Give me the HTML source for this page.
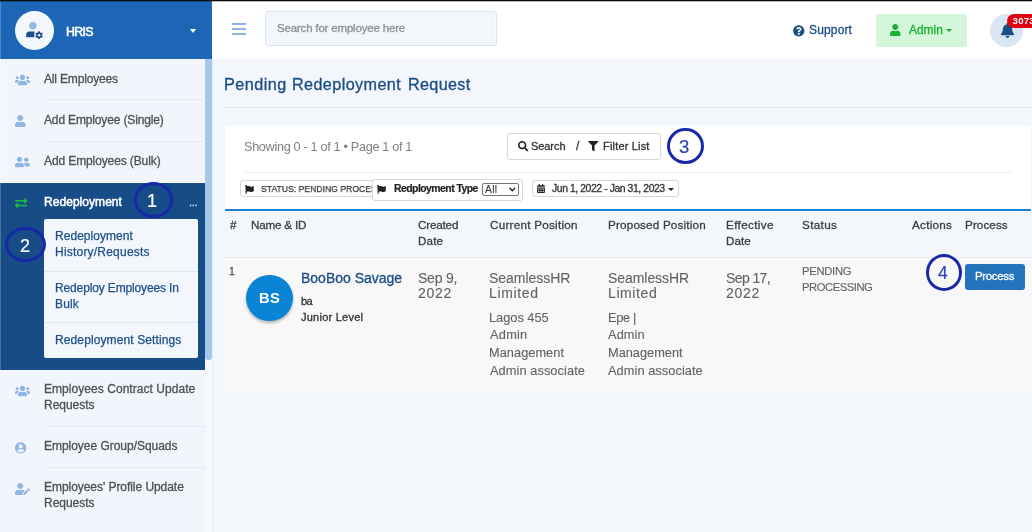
<!DOCTYPE html>
<html lang="en">
<head>
<meta charset="utf-8">
<title>Pending Redeployment Request</title>
<style>
*{box-sizing:border-box;margin:0;padding:0}
html,body{width:1032px;height:532px;overflow:hidden}
body{position:relative;background:#f3f6fb;font-family:"Liberation Sans",Arial,sans-serif;color:#555;font-size:12px}
.abs{position:absolute}
.t{position:absolute;white-space:nowrap;line-height:20px;will-change:transform}
svg{position:absolute;overflow:visible}
#topline{left:0;top:0;width:1032px;height:1px;background:#0d0d0d}
#topline2{left:0;top:1px;width:1032px;height:1px;background:rgba(0,0,0,.28)}
/* sidebar */
#sidebar{left:0;top:0;width:212px;height:532px;background:#f2f6fc}
#sideborder{left:211.5px;top:59px;width:1px;height:473px;background:#e6edf7}
#brand{left:0;top:0;width:212px;height:59px;background:#1c66b5}
#brand .av{left:15px;top:11px;width:39px;height:39px;border-radius:50%;background:#f4f7fb}
#track{left:205.4px;top:59px;width:6.6px;height:473px;background:#f5f8fc}
#scroll{left:205.4px;top:59px;width:6.6px;height:301px;background:#a3c8ec;border-radius:0 0 3px 3px}
.sep{position:absolute;left:44px;width:162px;height:1px;background:#e1ebf6}
#active{left:0;top:182.8px;width:205.4px;height:186.8px;background:#184c86}
#actline{left:0;top:181.8px;width:205.4px;height:1px;background:#fdfeff}
#sub{left:44px;top:219px;width:154px;height:139px;background:#f3f7fc;border-radius:2px}
#sub .l{position:absolute;left:0;width:154px;height:1px;background:#dce6f2}
/* topbar */
#topbar{left:212px;top:0;width:820px;height:59px;background:#fff}
#searchbox{left:265px;top:11px;width:232px;height:35px;background:#f3f6fb;border:1px solid #d6e3f3;border-radius:3px}
#searchin{left:269px;top:14px;width:224px;height:29px;background:#f3f6fb;border:1px solid #edf2f9;border-radius:3px}
.ham{position:absolute;left:232px;width:13.5px;height:2px;background:#8bb4e0}
#admin{left:876px;top:14px;width:91px;height:33px;background:#d3f5d8;border-radius:3px}
#bell{left:990px;top:14px;width:33px;height:33px;border-radius:50%;background:#dbe6f4}
#badge{will-change:transform;left:1007px;top:13.9px;width:40px;height:13.8px;border-radius:7px;background:#de0211;color:#fff;font-weight:bold;font-size:9.6px;line-height:14px;padding-left:5.6px;letter-spacing:.25px}
/* content */
#hr{left:224px;top:107px;width:808px;height:1px;background:#dce4ee}
#card{left:224.5px;top:125.5px;width:806.5px;height:84px;background:#fff}
#cardline{left:244px;top:172px;width:767px;height:1px;background:#ececec}
#btn{left:507px;top:133.3px;width:153.5px;height:26.4px;border:1px solid #d8d8d8;border-radius:3px;background:#fff}
.circ{position:absolute;border:3.8px solid #1728a9;border-radius:50%}
.chip{position:absolute;border:1px solid #d8d8d8;border-radius:3px;background:#fff;overflow:hidden}
#blue{left:224.5px;top:209px;width:806.5px;height:2px;background:#1c7fd2}
#thead{left:224.5px;top:211px;width:806.5px;height:46px;background:#f3f6fb}
#theadline{left:224.5px;top:257px;width:806.5px;height:1px;background:#e5e8ed}
#row{left:224.5px;top:258px;width:806.5px;height:134px;background:#f8f8f8}
#bs{left:246.2px;top:274.8px;width:46.4px;height:46.4px;border-radius:50%;background:#0b84d6;box-shadow:0 2px 3px rgba(0,0,0,.28)}
#proc{left:965px;top:263.5px;width:60px;height:26.3px;background:#2474bb;border-radius:3px}
#sel{left:482px;top:182.5px;width:36.5px;height:13px;border:1px solid #767676;border-radius:2px;background:#fff}
</style>
</head>
<body>
<!-- SIDEBAR -->
<div id="sidebar" class="abs"></div>
<div id="track" class="abs"></div>
<div id="sideborder" class="abs"></div>
<div id="brand" class="abs"><div class="av abs"></div></div>
<!-- user-cog brand icon -->
<svg style="left:24px;top:20px" width="20" height="20" viewBox="0 0 20 20">
  <circle cx="8.9" cy="5.7" r="3.7" fill="#93b9e4"/>
  <path d="M2.2 17.2v-2.6c0-1.7 1.3-3 3-3h5.2v5.6z" fill="#1b4f8b"/>
  <g fill="#1b4f8b"><circle cx="15.1" cy="15.2" r="2.9"/>
  <g stroke="#1b4f8b" stroke-width="1.6" stroke-linecap="butt">
   <line x1="15.1" y1="11.3" x2="15.1" y2="19.1"/><line x1="11.7" y1="13.25" x2="18.5" y2="17.15"/><line x1="11.7" y1="17.15" x2="18.5" y2="13.25"/></g>
  <circle cx="15.1" cy="15.2" r="1.25" fill="#f4f7fb"/></g>
</svg>
<div class="abs" style="left:189.5px;top:29px;width:0;height:0;border-left:3.5px solid transparent;border-right:3.5px solid transparent;border-top:4px solid #fff"></div>
<div id="scroll" class="abs"></div>

<div class="sep" style="top:99px"></div>
<div class="sep" style="top:141px"></div>
<div id="actline" class="abs"></div>
<div id="active" class="abs"></div>
<div id="sub" class="abs">
  <div class="l" style="top:52px"></div>
  <div class="l" style="top:102.5px"></div>
</div>
<div class="sep" style="top:426px"></div>
<div class="sep" style="top:467px"></div>

<!-- sidebar icons -->
<svg style="left:15.2px;top:74.3px" width="15" height="12" viewBox="0 0 640 512" fill="#8fb6e2"><path d="M96 224c35.300 0 64-28.700 64-64s-28.700-64-64-64-64 28.700-64 64 28.700 64 64 64zm448 0c35.300 0 64-28.700 64-64s-28.700-64-64-64-64 28.700-64 64 28.700 64 64 64zm32 32h-64c-17.600 0-33.500 7.100-45.100 18.600 40.300 22.100 68.900 62 75.100 109.400h66c17.700 0 32-14.300 32-32v-32c0-35.300-28.700-64-64-64zm-256 0c61.900 0 112-50.100 112-112S381.900 32 320 32 208 82.100 208 144s50.100 112 112 112zm76.800 32h-8.300c-20.800 10-43.900 16-68.500 16s-47.600-6-68.500-16h-8.300C179.600 288 128 339.600 128 403.200V432c0 26.500 21.500 48 48 48h288c26.500 0 48-21.500 48-48v-28.800c0-63.600-51.600-115.200-115.200-115.200zm-223.700-13.400C161.500 263.100 145.600 256 128 256H64c-35.300 0-64 28.700-64 64v32c0 17.700 14.300 32 32 32h65.900c6.300-47.400 34.900-87.300 75.200-109.400z"/></svg>
<svg style="left:15.3px;top:114.8px" width="10.5" height="12" viewBox="0 0 448 512" fill="#8fb6e2"><path d="M224 256c70.700 0 128-57.300 128-128S294.700 0 224 0 96 57.300 96 128s57.300 128 128 128zm89.600 32h-16.700c-22.200 10.200-46.900 16-72.900 16s-50.600-5.800-72.900-16h-16.700C60.200 288 0 348.200 0 422.400V464c0 26.500 21.500 48 48 48h352c26.500 0 48-21.500 48-48v-41.600c0-74.200-60.200-134.400-134.400-134.400z"/></svg>
<svg style="left:15.2px;top:156.2px" width="15" height="12" viewBox="0 0 640 512" fill="#8fb6e2"><path d="M192 256c61.900 0 112-50.100 112-112S253.900 32 192 32 80 82.100 80 144s50.100 112 112 112zm76.800 32h-8.300c-20.800 10-43.900 16-68.500 16s-47.600-6-68.500-16h-8.300C51.600 288 0 339.600 0 403.200V432c0 26.500 21.500 48 48 48h288c26.500 0 48-21.500 48-48v-28.800c0-63.600-51.600-115.200-115.200-115.200zM480 256c53 0 96-43 96-96s-43-96-96-96-96 43-96 96 43 96 96 96zm48 32h-3.800c-13.900 4.800-28.600 8-44.200 8s-30.300-3.200-44.200-8H432c-20.400 0-39.200 5.900-55.700 15.400 24.400 26.300 39.700 61.200 39.700 99.800v38.400c0 2.200-.5 4.300-.6 6.400H592c26.500 0 48-21.500 48-48 0-61.900-50.100-112-112-112z"/></svg>
<svg style="left:15.2px;top:196.7px" width="12.3" height="12.3" viewBox="0 0 512 512" fill="#1bc038"><path d="M0 168v-16c0-13.255 10.745-24 24-24h360V80c0-21.367 25.899-32.042 40.971-16.971l80 80c9.372 9.373 9.372 24.569 0 33.941l-80 80C409.956 271.982 384 261.456 384 240v-48H24c-13.255 0-24-10.745-24-24zm488 152H128v-48c0-21.314-25.862-32.080-40.971-16.971l-80 80c-9.372 9.373-9.372 24.569 0 33.941l80 80C102.057 463.968 128 453.437 128 432v-48h360c13.255 0 24-10.745 24-24v-16c0-13.255-10.745-24-24-24z"/></svg>
<svg style="left:15.2px;top:384.8px" width="15" height="12" viewBox="0 0 640 512" fill="#8fb6e2"><path d="M96 224c35.300 0 64-28.700 64-64s-28.700-64-64-64-64 28.700-64 64 28.700 64 64 64zm448 0c35.300 0 64-28.700 64-64s-28.700-64-64-64-64 28.700-64 64 28.700 64 64 64zm32 32h-64c-17.600 0-33.500 7.100-45.100 18.600 40.300 22.100 68.900 62 75.100 109.400h66c17.700 0 32-14.300 32-32v-32c0-35.300-28.700-64-64-64zm-256 0c61.900 0 112-50.100 112-112S381.900 32 320 32 208 82.100 208 144s50.100 112 112 112zm76.800 32h-8.300c-20.800 10-43.900 16-68.500 16s-47.600-6-68.500-16h-8.300C179.600 288 128 339.600 128 403.200V432c0 26.500 21.500 48 48 48h288c26.500 0 48-21.500 48-48v-28.800c0-63.600-51.600-115.200-115.200-115.200zm-223.700-13.400C161.500 263.100 145.600 256 128 256H64c-35.300 0-64 28.700-64 64v32c0 17.700 14.300 32 32 32h65.900c6.300-47.400 34.900-87.300 75.200-109.400z"/></svg>
<svg style="left:15.2px;top:441.7px" width="11.4" height="11.7" viewBox="0 0 496 512" fill="#8fb6e2"><path d="M248 8C111 8 0 119 0 256s111 248 248 248 248-111 248-248S385 8 248 8zm0 96c48.600 0 88 39.400 88 88s-39.400 88-88 88-88-39.400-88-88 39.400-88 88-88zm0 344c-58.700 0-111.300-26.600-146.500-68.200 18.800-35.400 55.600-59.800 98.500-59.800 2.400 0 4.800.4 7.100 1.100 13 4.200 26.600 6.900 40.900 6.900 14.300 0 28-2.700 40.900-6.900 2.300-.7 4.700-1.100 7.100-1.100 42.900 0 79.700 24.400 98.500 59.800C359.300 421.400 306.700 448 248 448z"/></svg>
<svg style="left:15.2px;top:482.5px" width="15" height="12" viewBox="0 0 640 512" fill="#8fb6e2"><path d="M224 256c70.700 0 128-57.300 128-128S294.700 0 224 0 96 57.300 96 128s57.300 128 128 128zm89.600 32h-16.700c-22.200 10.200-46.900 16-72.900 16s-50.600-5.800-72.900-16h-16.700C60.200 288 0 348.200 0 422.400V464c0 26.500 21.500 48 48 48h274.900c-2.400-6.800-3.400-14-2.600-21.300l6.800-60.900 1.200-11.100 7.900-7.900 77.300-77.300c-24.500-27.700-60-45.500-99.900-45.500zm45.300 145.300l-6.800 61c-1.100 10.200 7.500 18.800 17.600 17.600l60.900-6.800 137.900-137.900-71.700-71.700-137.900 137.800zM633 268.900L595.100 231c-9.300-9.300-24.500-9.300-33.800 0l-37.800 37.800-4.100 4.100 71.800 71.700 41.800-41.800c9.300-9.400 9.300-24.500 0-33.900z"/></svg>

<!-- annotation circles 1 & 2 -->
<div class="circ" style="left:133.5px;top:182.3px;width:39.7px;height:35.6px"></div>
<div class="circ" style="left:5px;top:227.2px;width:41px;height:35.2px"></div>

<!-- TOPBAR -->
<div id="topbar" class="abs"></div>
<div class="ham" style="top:22.8px"></div>
<div class="ham" style="top:27.8px"></div>
<div class="ham" style="top:32.8px"></div>
<div id="searchbox" class="abs"></div>
<div id="searchin" class="abs"></div>
<svg style="left:792.8px;top:24.5px" width="11.6" height="11.6" viewBox="0 0 512 512" fill="#1a4c86"><path d="M504 256c0 136.997-111.043 248-248 248S8 392.997 8 256C8 119.083 119.043 8 256 8s248 111.083 248 248zM262.655 90c-54.497 0-89.255 22.957-116.549 63.758-3.536 5.286-2.353 12.415 2.715 16.258l34.699 26.310c5.205 3.947 12.621 3.008 16.665-2.122 17.864-22.658 30.113-35.797 57.303-35.797 20.429 0 45.698 13.148 45.698 32.958 0 14.976-12.363 22.667-32.534 33.976C247.128 238.528 216 254.941 216 296v4c0 6.627 5.373 12 12 12h56c6.627 0 12-5.373 12-12v-1.333c0-28.462 83.186-29.647 83.186-106.667 0-58.002-60.165-102-116.531-102zM256 338c-25.365 0-46 20.635-46 46 0 25.364 20.635 46 46 46s46-20.636 46-46c0-25.365-20.635-46-46-46z"/></svg>
<div id="admin" class="abs"></div>
<svg style="left:890.4px;top:23.6px" width="10.5" height="12" viewBox="0 0 448 512" fill="#18b233"><path d="M224 256c70.700 0 128-57.300 128-128S294.700 0 224 0 96 57.300 96 128s57.300 128 128 128zm89.600 32h-16.700c-22.200 10.200-46.900 16-72.900 16s-50.600-5.800-72.900-16h-16.700C60.200 288 0 348.200 0 422.400V464c0 26.500 21.500 48 48 48h352c26.500 0 48-21.500 48-48v-41.600c0-74.200-60.200-134.400-134.400-134.400z"/></svg>
<div class="abs" style="left:946.3px;top:29.3px;width:0;height:0;border-left:3.2px solid transparent;border-right:3.2px solid transparent;border-top:3.6px solid #18b233"></div>
<div id="bell" class="abs"></div>
<svg style="left:1000.7px;top:22.9px" width="13.1" height="15" viewBox="0 0 448 512" fill="#1a4c86"><path d="M224 512c35.320 0 63.970-28.650 63.970-64H160.030c0 35.350 28.650 64 63.970 64zm215.390-149.710c-19.320-20.760-55.470-51.990-55.470-154.290 0-77.700-54.480-139.900-127.940-155.160V32c0-17.670-14.320-32-31.980-32s-31.980 14.330-31.980 32v20.840C118.560 68.100 64.080 130.300 64.080 208c0 102.300-36.150 133.530-55.470 154.290-6 6.450-8.660 14.160-8.610 21.710.11 16.400 12.980 32 32.100 32h383.800c19.120 0 32-15.600 32.100-32 .05-7.550-2.610-15.270-8.610-21.710z"/></svg>
<div id="badge" class="abs">3073</div>

<!-- CONTENT -->
<div id="hr" class="abs"></div>
<div id="card" class="abs"></div>
<div id="btn" class="abs"></div>
<svg style="left:517.7px;top:140.7px" width="10.3" height="10.3" viewBox="0 0 512 512" fill="#222"><path d="M505 442.700L405.300 343c-4.500-4.500-10.600-7-17-7H372c27.600-35.300 44-79.700 44-128C416 93.100 322.900 0 208 0S0 93.100 0 208s93.100 208 208 208c48.300 0 92.700-16.400 128-44v16.300c0 6.400 2.500 12.500 7 17l99.700 99.700c9.400 9.400 24.600 9.400 33.900 0l28.300-28.300c9.400-9.400 9.400-24.600.1-34zM208 336c-70.700 0-128-57.200-128-128 0-70.700 57.200-128 128-128 70.700 0 128 57.200 128 128 0 70.700-57.200 128-128 128z"/></svg>
<svg style="left:587.5px;top:140.7px" width="10.5" height="10.3" viewBox="0 0 512 512" fill="#222"><path d="M487.976 0H24.028C2.710 0-8.047 25.866 7.058 40.971L192 225.941V432c0 7.831 3.821 15.170 10.237 19.662l80 55.980C298.020 518.690 320 507.493 320 487.980V225.941l184.947-184.970C520.021 25.896 509.338 0 487.976 0z"/></svg>
<div class="circ" style="left:666.9px;top:127.6px;width:37.2px;height:36.8px"></div>
<div id="cardline" class="abs"></div>

<!-- filter chips -->
<div class="chip" style="left:240px;top:180.3px;width:140px;height:17px"></div>
<svg style="left:245.2px;top:184.5px" width="8.8" height="8.8" viewBox="0 0 512 512" fill="#222"><path d="M349.565 98.783C295.978 98.783 251.721 64 184.348 64c-24.955 0-47.309 4.384-68.045 12.013a55.947 55.947 0 0 0 3.586-23.562C118.117 24.015 94.806 1.206 66.338.048 34.345-1.254 8 24.296 8 56c0 19.026 9.497 35.825 24 45.945V488c0 13.255 10.745 24 24 24h16c13.255 0 24-10.745 24-24v-94.400c28.311-12.064 63.582-22.122 114.435-22.122 53.588 0 97.844 34.783 165.217 34.783 48.169 0 86.667-16.294 122.505-40.858C506.840 359.452 512 349.571 512 339.045v-243.100c0-23.393-24.269-38.870-45.485-29.016-34.338 15.948-76.454 31.854-116.950 31.854z"/></svg>
<div class="abs" style="left:256px;top:181.3px;width:116px;height:15px;overflow:hidden"><span class="t" style="left:5px;top:-2px;font-size:9.9px;color:#333;transform:scaleX(.874);transform-origin:0 50%;-webkit-text-stroke:.25px #333">STATUS: PENDING PROCESSING</span></div>
<div class="chip" style="left:372.3px;top:178.6px;width:151px;height:22px"></div>
<svg style="left:377.4px;top:184.5px" width="8.8" height="8.8" viewBox="0 0 512 512" fill="#222"><path d="M349.565 98.783C295.978 98.783 251.721 64 184.348 64c-24.955 0-47.309 4.384-68.045 12.013a55.947 55.947 0 0 0 3.586-23.562C118.117 24.015 94.806 1.206 66.338.048 34.345-1.254 8 24.296 8 56c0 19.026 9.497 35.825 24 45.945V488c0 13.255 10.745 24 24 24h16c13.255 0 24-10.745 24-24v-94.400c28.311-12.064 63.582-22.122 114.435-22.122 53.588 0 97.844 34.783 165.217 34.783 48.169 0 86.667-16.294 122.505-40.858C506.840 359.452 512 349.571 512 339.045v-243.100c0-23.393-24.269-38.870-45.485-29.016-34.338 15.948-76.454 31.854-116.950 31.854z"/></svg>
<div id="sel" class="abs"></div>
<svg style="left:509px;top:186.5px" width="6.6" height="5" viewBox="0 0 6.6 5"><path d="M0.6 0.8L3.3 3.8L6 0.8" fill="none" stroke="#222" stroke-width="1.3"/></svg>
<div class="chip" style="left:532px;top:180.3px;width:146.5px;height:17px"></div>
<svg style="left:536.9px;top:184.3px" width="8" height="9" viewBox="0 0 448 512" fill="#222"><path d="M0 464c0 26.500 21.500 48 48 48h352c26.500 0 48-21.500 48-48V192H0v272zm320-196c0-6.600 5.400-12 12-12h40c6.600 0 12 5.400 12 12v40c0 6.600-5.400 12-12 12h-40c-6.600 0-12-5.400-12-12v-40zm0 128c0-6.600 5.400-12 12-12h40c6.600 0 12 5.400 12 12v40c0 6.600-5.400 12-12 12h-40c-6.600 0-12-5.400-12-12v-40zM192 268c0-6.600 5.400-12 12-12h40c6.600 0 12 5.400 12 12v40c0 6.600-5.400 12-12 12h-40c-6.600 0-12-5.400-12-12v-40zm0 128c0-6.600 5.400-12 12-12h40c6.600 0 12 5.400 12 12v40c0 6.600-5.400 12-12 12h-40c-6.600 0-12-5.400-12-12v-40zM64 268c0-6.600 5.400-12 12-12h40c6.600 0 12 5.400 12 12v40c0 6.600-5.400 12-12 12H76c-6.600 0-12-5.400-12-12v-40zm0 128c0-6.600 5.400-12 12-12h40c6.600 0 12 5.400 12 12v40c0 6.600-5.400 12-12 12H76c-6.600 0-12-5.400-12-12v-40zM400 64h-48V16c0-8.800-7.200-16-16-16h-32c-8.800 0-16 7.200-16 16v48H160V16c0-8.800-7.200-16-16-16h-32c-8.800 0-16 7.200-16 16v48H48C21.500 64 0 85.500 0 112v48h448v-48c0-26.500-21.500-48-48-48z"/></svg>
<div class="abs" style="left:667.8px;top:187.6px;width:0;height:0;border-left:3.1px solid transparent;border-right:3.1px solid transparent;border-top:3px solid #222"></div>

<div id="blue" class="abs"></div>
<div id="thead" class="abs"></div>
<div id="theadline" class="abs"></div>
<div id="row" class="abs"></div>
<div id="bs" class="abs"></div>
<span class="t" style="left:259.3px;top:288.3px;font-size:14.7px;color:#fff;font-weight:bold;letter-spacing:0.3px">BS</span>
<div class="circ" style="left:926px;top:253.8px;width:36.4px;height:37.1px"></div>
<div id="proc" class="abs"></div>

<span class="t" style="left:66px;top:25px;font-size:12.4px;line-height:14px;color:#fff;letter-spacing:-0.71px;-webkit-text-stroke:0.55px #fff;">HRIS</span>
<span class="t" style="left:44px;top:73px;font-size:12px;line-height:13px;color:#505050;letter-spacing:-0.16px;-webkit-text-stroke:0.3px #505050;">All Employees</span>
<span class="t" style="left:44px;top:114px;font-size:12px;line-height:13px;color:#505050;letter-spacing:-0.15px;-webkit-text-stroke:0.3px #505050;">Add Employee (Single)</span>
<span class="t" style="left:44px;top:155px;font-size:12px;line-height:13px;color:#505050;letter-spacing:-0.11px;-webkit-text-stroke:0.3px #505050;">Add Employees (Bulk)</span>
<span class="t" style="left:44px;top:196px;font-size:12px;line-height:13px;color:#fff;letter-spacing:0.05px;-webkit-text-stroke:0.5px #fff;">Redeployment</span>
<span class="t" style="left:189px;top:196px;font-size:11px;line-height:12px;color:#c9dcf2;letter-spacing:-0.26px;-webkit-text-stroke:0.3px #c9dcf2;">...</span>
<span class="t" style="left:55px;top:230px;font-size:12px;line-height:13px;color:#1b4f8b;letter-spacing:0.04px;-webkit-text-stroke:0.25px #1b4f8b;">Redeployment</span>
<span class="t" style="left:55px;top:246px;font-size:12px;line-height:13px;color:#1b4f8b;letter-spacing:0.21px;-webkit-text-stroke:0.25px #1b4f8b;">History/Requests</span>
<span class="t" style="left:55px;top:282px;font-size:12px;line-height:13px;color:#1b4f8b;letter-spacing:-0.14px;-webkit-text-stroke:0.25px #1b4f8b;">Redeploy Employees In</span>
<span class="t" style="left:55px;top:298px;font-size:12px;line-height:13px;color:#1b4f8b;letter-spacing:0.13px;-webkit-text-stroke:0.25px #1b4f8b;">Bulk</span>
<span class="t" style="left:55px;top:334px;font-size:12px;line-height:13px;color:#1b4f8b;letter-spacing:0.11px;-webkit-text-stroke:0.25px #1b4f8b;">Redeployment Settings</span>
<span class="t" style="left:44px;top:383px;font-size:12px;line-height:13px;color:#505050;letter-spacing:0.05px;-webkit-text-stroke:0.3px #505050;">Employees Contract Update</span>
<span class="t" style="left:44px;top:399px;font-size:12px;line-height:13px;color:#505050;letter-spacing:-0.02px;-webkit-text-stroke:0.3px #505050;">Requests</span>
<span class="t" style="left:44px;top:440px;font-size:12px;line-height:13px;color:#505050;letter-spacing:-0.03px;-webkit-text-stroke:0.3px #505050;">Employee Group/Squads</span>
<span class="t" style="left:44px;top:481px;font-size:12px;line-height:13px;color:#505050;letter-spacing:-0.05px;-webkit-text-stroke:0.3px #505050;">Employees&#x27; Profile Update</span>
<span class="t" style="left:44px;top:497px;font-size:12px;line-height:13px;color:#505050;letter-spacing:-0.02px;-webkit-text-stroke:0.3px #505050;">Requests</span>
<span class="t" style="left:277px;top:22px;font-size:11.5px;line-height:13px;color:#8a8f96;letter-spacing:-0.18px;-webkit-text-stroke:0.3px #8a8f96;">Search for employee here</span>
<span class="t" style="left:809px;top:24px;font-size:12px;line-height:13px;color:#1a4c86;letter-spacing:0.15px;-webkit-text-stroke:0.3px #1a4c86;">Support</span>
<span class="t" style="left:909px;top:24px;font-size:12px;line-height:13px;color:#18b233;letter-spacing:-0.05px;-webkit-text-stroke:0.3px #18b233;">Admin</span>
<span class="t" style="left:224px;top:75px;font-size:16.2px;line-height:18px;color:#1a4c86;letter-spacing:0.47px;-webkit-text-stroke:0.3px #1a4c86;">Pending</span>
<span class="t" style="left:292px;top:75px;font-size:16.2px;line-height:18px;color:#1a4c86;letter-spacing:0.39px;-webkit-text-stroke:0.3px #1a4c86;">Redeployment</span>
<span class="t" style="left:408px;top:75px;font-size:16.2px;line-height:18px;color:#1a4c86;letter-spacing:0.32px;-webkit-text-stroke:0.3px #1a4c86;">Request</span>
<span class="t" style="left:244px;top:140px;font-size:12.7px;line-height:14px;color:#808080;letter-spacing:-0.33px;-webkit-text-stroke:0;">Showing 0 - 1 of 1 • Page 1 of 1</span>
<span class="t" style="left:531px;top:140px;font-size:11px;line-height:12px;color:#333;letter-spacing:-0.07px;-webkit-text-stroke:0.3px #333;">Search</span>
<span class="t" style="left:576px;top:140px;font-size:12px;line-height:13px;color:#333;-webkit-text-stroke:0.3px #333;">/</span>
<span class="t" style="left:603px;top:140px;font-size:11px;line-height:12px;color:#333;letter-spacing:0.18px;-webkit-text-stroke:0.3px #333;">Filter List</span>
<span class="t" style="left:394px;top:183px;font-size:10.4px;line-height:11px;color:#222;font-weight:bold;letter-spacing:-0.52px;-webkit-text-stroke:0.2px #222;">Redployment Type</span>
<span class="t" style="left:485px;top:184px;font-size:10.3px;line-height:11px;color:#3a3a3a;letter-spacing:0.30px;-webkit-text-stroke:0.1px #3a3a3a;">All</span>
<span class="t" style="left:552px;top:183px;font-size:10.4px;line-height:11px;color:#333;letter-spacing:-0.42px;-webkit-text-stroke:0.3px #333;">Jun 1, 2022 - Jan 31, 2023</span>
<span class="t" style="left:230px;top:218px;font-size:11.7px;line-height:13px;color:#3d3d3d;-webkit-text-stroke:0.3px #3d3d3d;">#</span>
<span class="t" style="left:251px;top:218px;font-size:11.7px;line-height:13px;color:#3d3d3d;letter-spacing:-0.21px;-webkit-text-stroke:0.3px #3d3d3d;">Name &amp; ID</span>
<span class="t" style="left:418px;top:218px;font-size:11.7px;line-height:13px;color:#3d3d3d;letter-spacing:-0.20px;-webkit-text-stroke:0.3px #3d3d3d;">Created</span>
<span class="t" style="left:418px;top:234px;font-size:11.7px;line-height:13px;color:#3d3d3d;letter-spacing:0.12px;-webkit-text-stroke:0.3px #3d3d3d;">Date</span>
<span class="t" style="left:490px;top:218px;font-size:11.7px;line-height:13px;color:#3d3d3d;letter-spacing:0.25px;-webkit-text-stroke:0.3px #3d3d3d;">Current Position</span>
<span class="t" style="left:608px;top:218px;font-size:11.7px;line-height:13px;color:#3d3d3d;letter-spacing:0.18px;-webkit-text-stroke:0.3px #3d3d3d;">Proposed Position</span>
<span class="t" style="left:726px;top:218px;font-size:11.7px;line-height:13px;color:#3d3d3d;letter-spacing:0.36px;-webkit-text-stroke:0.3px #3d3d3d;">Effective</span>
<span class="t" style="left:726px;top:234px;font-size:11.7px;line-height:13px;color:#3d3d3d;letter-spacing:0.01px;-webkit-text-stroke:0.3px #3d3d3d;">Date</span>
<span class="t" style="left:802px;top:218px;font-size:11.7px;line-height:13px;color:#3d3d3d;letter-spacing:0.34px;-webkit-text-stroke:0.3px #3d3d3d;">Status</span>
<span class="t" style="left:912px;top:218px;font-size:11.7px;line-height:13px;color:#3d3d3d;letter-spacing:0.25px;-webkit-text-stroke:0.3px #3d3d3d;">Actions</span>
<span class="t" style="left:965px;top:218px;font-size:11.7px;line-height:13px;color:#3d3d3d;letter-spacing:0.08px;-webkit-text-stroke:0.3px #3d3d3d;">Process</span>
<span class="t" style="left:229px;top:265px;font-size:10.5px;line-height:12px;color:#555;-webkit-text-stroke:0.3px #555;">1</span>
<span class="t" style="left:301px;top:271px;font-size:14px;line-height:15px;color:#1a4c86;letter-spacing:-0.01px;-webkit-text-stroke:0.3px #1a4c86;">BooBoo Savage</span>
<span class="t" style="left:301px;top:295px;font-size:11px;line-height:12px;color:#333;letter-spacing:-0.64px;-webkit-text-stroke:0.3px #333;">ba</span>
<span class="t" style="left:301px;top:311px;font-size:11px;line-height:12px;color:#333;letter-spacing:0.24px;-webkit-text-stroke:0.3px #333;">Junior Level</span>
<span class="t" style="left:418px;top:271px;font-size:14px;line-height:15px;color:#636363;letter-spacing:-0.23px;-webkit-text-stroke:0.12px #636363;">Sep 9,</span>
<span class="t" style="left:418px;top:286px;font-size:14px;line-height:15px;color:#636363;letter-spacing:0.72px;-webkit-text-stroke:0.12px #636363;">2022</span>
<span class="t" style="left:489px;top:271px;font-size:14px;line-height:15px;color:#636363;letter-spacing:-0.04px;-webkit-text-stroke:0.12px #636363;">SeamlessHR</span>
<span class="t" style="left:489px;top:286px;font-size:14px;line-height:15px;color:#636363;letter-spacing:0.64px;-webkit-text-stroke:0.12px #636363;">Limited</span>
<span class="t" style="left:489px;top:311px;font-size:12.8px;line-height:14px;color:#636363;letter-spacing:-0.01px;-webkit-text-stroke:0.12px #636363;">Lagos 455</span>
<span class="t" style="left:490px;top:328px;font-size:12.8px;line-height:14px;color:#636363;letter-spacing:0.24px;-webkit-text-stroke:0.12px #636363;">Admin</span>
<span class="t" style="left:489px;top:346px;font-size:12.8px;line-height:14px;color:#636363;letter-spacing:0.03px;-webkit-text-stroke:0.12px #636363;">Management</span>
<span class="t" style="left:490px;top:364px;font-size:12.8px;line-height:14px;color:#636363;letter-spacing:0.07px;-webkit-text-stroke:0.12px #636363;">Admin associate</span>
<span class="t" style="left:608px;top:271px;font-size:14px;line-height:15px;color:#636363;letter-spacing:-0.06px;-webkit-text-stroke:0.12px #636363;">SeamlessHR</span>
<span class="t" style="left:608px;top:286px;font-size:14px;line-height:15px;color:#636363;letter-spacing:0.60px;-webkit-text-stroke:0.12px #636363;">Limited</span>
<span class="t" style="left:608px;top:311px;font-size:12.8px;line-height:14px;color:#636363;letter-spacing:-0.30px;-webkit-text-stroke:0.12px #636363;">Epe |</span>
<span class="t" style="left:608px;top:328px;font-size:12.8px;line-height:14px;color:#636363;letter-spacing:0.09px;-webkit-text-stroke:0.12px #636363;">Admin</span>
<span class="t" style="left:608px;top:346px;font-size:12.8px;line-height:14px;color:#636363;letter-spacing:-0.01px;-webkit-text-stroke:0.12px #636363;">Management</span>
<span class="t" style="left:608px;top:364px;font-size:12.8px;line-height:14px;color:#636363;letter-spacing:0.06px;-webkit-text-stroke:0.12px #636363;">Admin associate</span>
<span class="t" style="left:726px;top:271px;font-size:14px;line-height:15px;color:#636363;letter-spacing:-0.60px;-webkit-text-stroke:0.12px #636363;">Sep 17,</span>
<span class="t" style="left:726px;top:286px;font-size:14px;line-height:15px;color:#636363;letter-spacing:0.72px;-webkit-text-stroke:0.12px #636363;">2022</span>
<span class="t" style="left:802px;top:265px;font-size:11.2px;line-height:12px;color:#636363;letter-spacing:-0.25px;-webkit-text-stroke:0.12px #636363;">PENDING</span>
<span class="t" style="left:802px;top:281px;font-size:11.2px;line-height:12px;color:#636363;letter-spacing:-0.42px;-webkit-text-stroke:0.12px #636363;">PROCESSING</span>
<span class="t" style="left:975px;top:270px;font-size:11.4px;line-height:13px;color:#fff;letter-spacing:-0.29px;-webkit-text-stroke:0.3px #fff;">Process</span>
<span class="t" style="left:147px;top:191px;font-size:18px;line-height:20px;color:#fff;-webkit-text-stroke:0.2px #fff;">1</span>
<span class="t" style="left:20px;top:236px;font-size:18px;line-height:20px;color:#fff;-webkit-text-stroke:0.2px #fff;">2</span>
<span class="t" style="left:679px;top:137px;font-size:18.5px;line-height:20px;color:#2a42c2;-webkit-text-stroke:0.2px #2a42c2;">3</span>
<span class="t" style="left:938px;top:264px;font-size:17.5px;line-height:19px;color:#2a42c2;-webkit-text-stroke:0.2px #2a42c2;">4</span>

<div class="abs" style="left:0;top:0;width:1px;height:370px;background:rgba(255,255,255,.22)"></div>
<div id="topline" class="abs"></div>
<div id="topline2" class="abs"></div>
</body>
</html>
